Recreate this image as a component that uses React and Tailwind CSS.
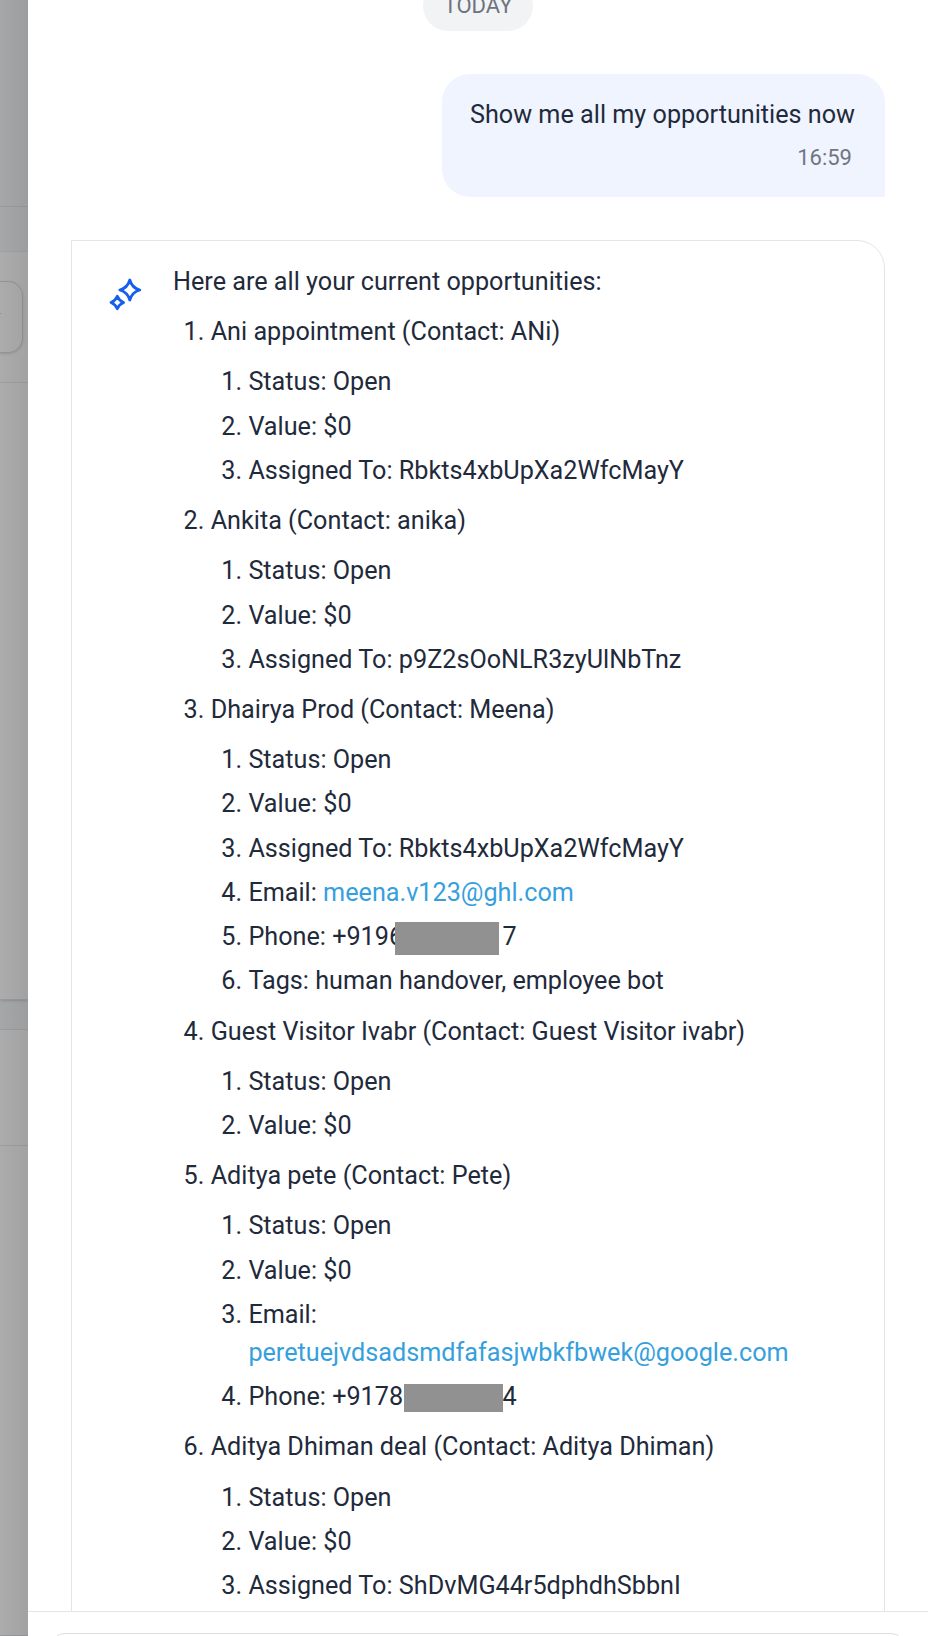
const OPPORTUNITIES = [
  {
    title: 'Ani appointment (Contact: ANi)',
    fields: [
      { label: 'Status', value: 'Open' },
      { label: 'Value', value: '$0' },
      { label: 'Assigned To', value: 'Rbkts4xbUpXa2WfcMayY' },
    ],
  },
  {
    title: 'Ankita (Contact: anika)',
    fields: [
      { label: 'Status', value: 'Open' },
      { label: 'Value', value: '$0' },
      { label: 'Assigned To', value: 'p9Z2sOoNLR3zyUlNbTnz' },
    ],
  },
  {
    title: 'Dhairya Prod (Contact: Meena)',
    fields: [
      { label: 'Status', value: 'Open' },
      { label: 'Value', value: '$0' },
      { label: 'Assigned To', value: 'Rbkts4xbUpXa2WfcMayY' },
      { label: 'Email', email: 'meena.v123@ghl.com' },
      { label: 'Phone', start: '+9196', end: '7', mask: 'w-[104px] h-[33px] -ml-[8px] mr-[3.5px] top-[1px]' },
      { label: 'Tags', value: 'human handover, employee bot' },
    ],
  },
  {
    title: 'Guest Visitor Ivabr (Contact: Guest Visitor ivabr)',
    fields: [
      { label: 'Status', value: 'Open' },
      { label: 'Value', value: '$0' },
    ],
  },
  {
    title: 'Aditya pete (Contact: Pete)',
    fields: [
      { label: 'Status', value: 'Open' },
      { label: 'Value', value: '$0' },
      { label: 'Email', email: 'peretuejvdsadsmdfafasjwbkfbwek@google.com' },
      { label: 'Phone', start: '+9178', end: '4', mask: 'w-[99px] h-[28px] ml-[0.5px] top-[1px]' },
    ],
  },
  {
    title: 'Aditya Dhiman deal (Contact: Aditya Dhiman)',
    fields: [
      { label: 'Status', value: 'Open' },
      { label: 'Value', value: '$0' },
      { label: 'Assigned To', value: 'ShDvMG44r5dphdhSbbnI' },
    ],
  },
]

function Sparkles() {
  return (
    <svg viewBox="0 0 34 34" className="w-[34px] h-[34px] shrink-0" fill="none" stroke="#155eef" strokeWidth="2.8" strokeLinejoin="round">
      <path d="M20.8 2 Q23 9.8 30.8 12 Q23 14.2 20.8 22 Q18.6 14.2 10.8 12 Q18.6 9.8 20.8 2Z" />
      <path d="M8.3 18.2 Q10.1 22.7 14.6 24.5 Q10.1 26.3 8.3 30.8 Q6.5 26.3 2 24.5 Q6.5 22.7 8.3 18.2Z" />
    </svg>
  )
}

function Field({ field }) {
  return (
    <div className="min-w-0">
      {field.label}: {field.value}
      {field.email && <a className="text-[#36a0dd]">{field.email}</a>}
      {field.start && (
        <span className="inline-flex items-center h-[38px] align-top">
          {field.start}
          <span className={`relative bg-[#919191] ${field.mask}`}></span>
          {field.end}
        </span>
      )}
    </div>
  )
}

// Dimmed page behind the drawer
function Backdrop() {
  return (
    <div className="relative w-7 shrink-0 flex flex-col overflow-hidden bg-[#a5a7a9]">
      <div className="h-[206px] border-b border-[#9a9c9f] box-content"></div>
      <div className="h-[44px]"></div>
      <div className="h-[132px] bg-[#acacac] border-t border-b border-[#a0a1a3] pt-[29px]">
        <div className="w-[23px] h-[72px] border border-l-0 border-[#92949b] rounded-r-[15px] flex items-center shadow-sm">
          <div className="w-[1px] h-[1px] bg-[#8b8d92] -mt-[8px]"></div>
        </div>
      </div>
      <div className="h-[617px] bg-[#acacac] border-b border-[#97999d] shadow-sm"></div>
      <div className="h-[29px]"></div>
      <div className="h-[117px] bg-[#acacac] border-t border-b border-[#9c9d9f]"></div>
      <div className="flex-1 bg-[#acacac] border-b border-[#97999d]"></div>
      <div className="absolute inset-0 bg-linear-to-r from-black/0 to-black/6"></div>
    </div>
  )
}

export default function App() {
  return (
    <div className="flex w-[928px] h-[1636px] overflow-hidden font-['Roboto',sans-serif] text-[25.2px] leading-[38px] text-[#1f2a3b]">
      <Backdrop />

      <main className="flex-1 min-w-0 flex flex-col bg-white">
        <div className="h-[1611px] shrink-0 overflow-hidden pl-[43px] pr-[43px]">
          {/* Data */}
          <div className="flex justify-center">
            <div className="-mt-[19px] w-[110px] h-[50px] rounded-full bg-[#f2f3f5] text-[#6d7381] text-[22px] flex items-center justify-center">
              TODAY
            </div>
          </div>

          {/* Mensagem do usuário */}
          <div className="flex justify-end mt-[43px]">
            <div className="w-[443px] h-[123px] bg-[#eff4ff] rounded-[28px] rounded-br-none pl-[28px] pr-[28px] pt-[22px]">
              <p className="whitespace-nowrap">Show me all my opportunities now</p>
              <p className="text-right text-[22px] text-[#6f7583] leading-[32px] mt-[8px] pr-[5px]">16:59</p>
            </div>
          </div>

          {/* Resposta do assistente */}
          <div className="mt-[43px] h-[1500px] border border-[#e4e5e9] rounded-tr-[28px] flex pl-[37px] pr-[28px] pt-[22px]">
            <div className="pt-[15px] w-[64px] shrink-0">
              <Sparkles />
            </div>
            <div className="flex-1 min-w-0">
              <p>Here are all your current opportunities:</p>
              <ol>
                {OPPORTUNITIES.map((item, i) => (
                  <li key={i} className="flex pt-[12.2px]">
                    <span className="w-[37.7px] shrink-0 pl-[10.6px]">{i + 1}.</span>
                    <div className="flex-1 min-w-0">
                      <p className="whitespace-nowrap">{item.title}</p>
                      <ol className="pt-[12.2px] flex flex-col gap-[6.25px]">
                        {item.fields.map((field, j) => (
                          <li key={j} className="flex">
                            <span className="w-[37.7px] shrink-0 pl-[10.6px]">{j + 1}.</span>
                            <Field field={field} />
                          </li>
                        ))}
                      </ol>
                    </div>
                  </li>
                ))}
              </ol>
            </div>
          </div>
        </div>

        <div className="flex-1 border-t border-[#e4e5e8] px-[22px] pt-[21px]">
          <div className="h-[80px] border border-[#dcdde0] rounded-[15px]"></div>
        </div>
      </main>
    </div>
  )
}
